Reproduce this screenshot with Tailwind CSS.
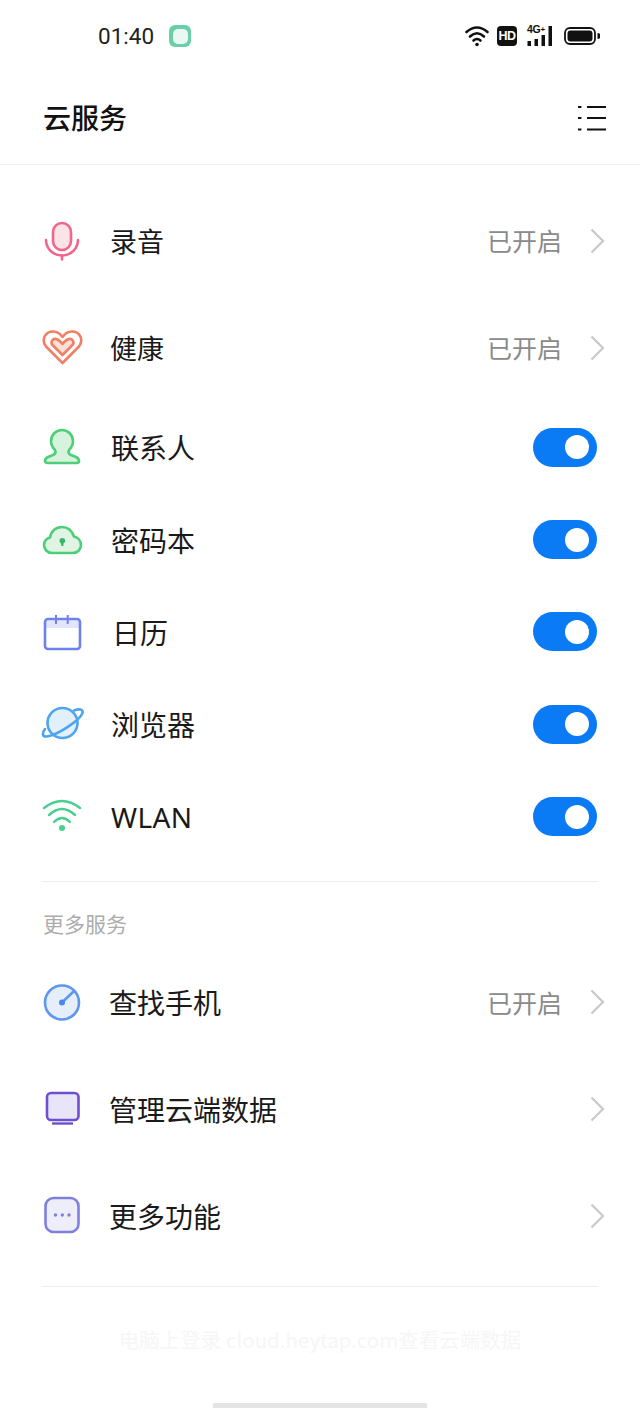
<!doctype html>
<html lang="zh">
<head>
<meta charset="utf-8">
<script src="https://cdn.jsdelivr.net/npm/@tailwindcss/browser@4"></script>
</head>
<body class="bg-white">
<div class="w-[640px] h-[1408px] flex flex-col overflow-hidden bg-white text-[#1a1a1a] font-['Noto_Sans_CJK_SC','Noto_Sans',sans-serif]">

  <!-- status bar -->
  <div class="h-[72px] shrink-0 flex items-center pl-[98px] pr-[40px]">
    <span class="text-[22.5px] leading-none font-['Roboto',sans-serif] text-[#222]">01:40</span>
    <span class="ml-[15px] w-[22px] h-[22px] rounded-[6px] bg-[#68cfa8] flex items-center justify-center">
      <span class="w-[15px] h-[15px] rounded-[5px] bg-[#e9f8f2]"></span>
    </span>
    <div class="ml-auto flex items-center gap-[8px]">
      <svg width="24" height="22" viewBox="0 0 24 22" fill="none" stroke="#111" stroke-width="2.6" stroke-linecap="round">
        <path d="M1.5 7 Q12 -2 22.5 7"/><path d="M5 11.5 Q12 5 19 11.5"/><path d="M8.5 15.5 Q12 12.5 15.5 15.5"/>
        <circle cx="12" cy="19.5" r="1.8" fill="#111" stroke="none"/>
      </svg>
      <span class="w-[20px] h-[20px] rounded-[4px] bg-[#111] text-white text-[12.5px] leading-[20px] font-bold text-center font-['Liberation_Sans',sans-serif] tracking-[-0.5px]">HD</span>
      <span class="relative ml-[2px] w-[26px] h-[22px]">
        <span class="absolute left-0 top-[-1px] text-[10.5px] leading-[11px] font-bold font-['Liberation_Sans',sans-serif] tracking-[-0.3px] text-[#111]">4G<span class="text-[8px] align-top">+</span></span>
        <svg class="absolute inset-0" width="26" height="22" viewBox="0 0 26 22" fill="#111">
          <rect x="0.500" y="16" width="3.500" height="5"/><rect x="7.500" y="14" width="3.500" height="7"/><rect x="14.500" y="10" width="3.500" height="11"/><rect x="21.500" y="1" width="3.500" height="20"/>
        </svg>
      </span>
      <svg class="ml-[3px]" width="36" height="20" viewBox="0 0 36 20" fill="none">
        <rect x="1" y="2" width="30" height="16" rx="5" stroke="#111" stroke-width="1.8"/>
        <rect x="3.5" y="4.5" width="25" height="11" rx="3" fill="#111"/>
        <path d="M33.5 7 a3 3 0 0 1 0 6z" fill="#111"/>
      </svg>
    </div>
  </div>

  <!-- title bar -->
  <div class="h-[93px] shrink-0 flex items-center justify-between pl-[43px] pr-[34px] border-b border-[#f1f1f1]">
    <h1 class="mb-[2px] text-[28px] leading-none font-medium text-[#111]">云服务</h1>
    <svg width="28" height="26" viewBox="0 0 28 26" fill="none" stroke="#111" stroke-width="2">
      <path d="M9 2h19M9 13h19M9 24.500h19"/><path d="M0 2h3.4M0 13h3.4M0 24.500h3.4"/>
    </svg>
  </div>

  <!-- first group -->
  <div class="pt-[22px] px-[40px] shrink-0">
    <div class="h-[107px] flex items-center">
      <svg class="shrink-0 mt-[2px]" width="44" height="44" viewBox="0 0 44 44" fill="none" stroke="#f0668c" stroke-width="2.6" stroke-linecap="round">
        <rect x="13" y="3" width="18" height="27" rx="9" fill="#fbe3e6"/>
        <path d="M6 20 a16 15.500 0 0 0 32 0"/><path d="M22 35.500v4"/>
      </svg>
      <span class="ml-[26px] text-[27px] leading-none">录音</span>
      <span class="ml-auto text-[25px] leading-none text-[#8a8a8a]">已开启</span>
      <svg class="ml-[28px] mr-[-5px] shrink-0" width="15" height="26" viewBox="0 0 15 26" fill="none" stroke="#c9c9c9" stroke-width="2.2"><path d="M1.5 1.5 13 13 1.5 24.500"/></svg>
    </div>
    <div class="h-[107px] flex items-center">
      <svg class="shrink-0 mt-[2px]" width="44" height="44" viewBox="0 0 44 44" fill="none" stroke="#f27f63" stroke-width="2.6" stroke-linejoin="round">
        <path d="M22.500 36 L6 19.500 C1 13 5 4.500 13 4.500 C17 4.500 20.500 7 22.500 10 C24.500 7 28 4.500 32 4.500 C40 4.500 44 13 39 19.500 Z"/>
        <path d="M22.500 28 L12.500 18 C10 14.500 13 11.500 16 12 C18.500 12.500 21 15 22.500 17 C24 15 26.500 12.500 29 12 C32 11.500 35 14.500 32.500 18 Z" fill="#fbe0d8"/>
      </svg>
      <span class="ml-[26px] text-[27px] leading-none">健康</span>
      <span class="ml-auto text-[25px] leading-none text-[#8a8a8a]">已开启</span>
      <svg class="ml-[28px] mr-[-5px] shrink-0" width="15" height="26" viewBox="0 0 15 26" fill="none" stroke="#c9c9c9" stroke-width="2.2"><path d="M1.5 1.5 13 13 1.5 24.500"/></svg>
    </div>

    <div class="h-[92.4px] flex items-center">
      <svg class="shrink-0" width="44" height="44" viewBox="0 0 44 44" fill="#d7f2dd" stroke="#4ccf78" stroke-width="2.6" stroke-linejoin="round">
        <path d="M22 5 C28 5 33 10 33 16 C33 20 31 23 29 25 C28 27 29 29 31 30 L36 32 C38 33 39 35 39 36 C39 37.500 38 38 36.500 38 L7.500 38 C6 38 5 37.500 5 36 C5 35 6 33 8 32 L13 30 C15 29 16 27 15 25 C13 23 11 20 11 16 C11 10 16 5 22 5Z"/>
      </svg>
      <span class="ml-[27px] text-[28px] leading-none">联系人</span>
      <span class="ml-auto mr-[3px] w-[64px] h-[39px] rounded-full bg-[#0a7bf5] flex items-center justify-end pr-[8px]"><span class="w-[24px] h-[24px] rounded-full bg-white"></span></span>
    </div>
    <div class="h-[92.4px] flex items-center">
      <svg class="shrink-0" width="44" height="44" viewBox="0 0 44 44" fill="#dff4e3" stroke="#4ccf78" stroke-width="2.6" stroke-linejoin="round">
        <path d="M12 35 C7 35 4 31 4 27 C4 23 7 20 10 19.500 C11 13 16 9 22 9 C28 9 32 13 34 18.500 C38 19.500 41 23 41 27 C41 31 38 35 33 35 Z"/>
        <circle cx="22.300" cy="22.700" r="2.800" fill="#35b866" stroke="none"/>
        <rect x="21.200" y="23" width="2.200" height="5" fill="#35b866" stroke="none"/>
      </svg>
      <span class="ml-[27px] text-[28px] leading-none">密码本</span>
      <span class="ml-auto mr-[3px] w-[64px] h-[39px] rounded-full bg-[#0a7bf5] flex items-center justify-end pr-[8px]"><span class="w-[24px] h-[24px] rounded-full bg-white"></span></span>
    </div>
    <div class="h-[92.4px] flex items-center">
      <svg class="shrink-0 mt-[2px]" width="44" height="44" viewBox="0 0 44 44" fill="none" stroke="#6e82ee" stroke-width="2.6">
        <rect x="5" y="8" width="35" height="9" fill="#e3e6fb" stroke="none"/>
        <rect x="5" y="8" width="35" height="30" rx="3"/>
        <path d="M16 4v9M27.700 4v9" stroke-width="2"/>
      </svg>
      <span class="ml-[28px] text-[28px] leading-none">日历</span>
      <span class="ml-auto mr-[3px] w-[64px] h-[39px] rounded-full bg-[#0a7bf5] flex items-center justify-end pr-[8px]"><span class="w-[24px] h-[24px] rounded-full bg-white"></span></span>
    </div>
    <div class="h-[92.4px] flex items-center">
      <svg class="shrink-0" width="44" height="44" viewBox="0 0 44 44" fill="none" stroke="#4ea4ee" stroke-width="2.6" stroke-linecap="round">
        <circle cx="22.500" cy="21" r="15" fill="#e2f0fb"/>
        <path d="M34 8.500 C41 6 44 8 42 12 C39 19 17 33 7 34.500 C2 35 2 31 5 27"/>
      </svg>
      <span class="ml-[27px] text-[28px] leading-none">浏览器</span>
      <span class="ml-auto mr-[3px] w-[64px] h-[39px] rounded-full bg-[#0a7bf5] flex items-center justify-end pr-[8px]"><span class="w-[24px] h-[24px] rounded-full bg-white"></span></span>
    </div>
    <div class="h-[92.4px] flex items-center">
      <svg class="shrink-0" width="44" height="44" viewBox="0 0 44 44" fill="none" stroke="#49cf8f" stroke-width="2.4" stroke-linecap="round">
        <path d="M4 13 Q22 -1 40 13"/><path d="M9 20 Q22 8 35 20"/><path d="M14 27 Q22 19 30 27"/>
        <circle cx="22" cy="33" r="3" fill="#49cf8f" stroke="none"/>
      </svg>
      <span class="ml-[27px] text-[28px] leading-none font-['Noto_Sans',sans-serif] tracking-[0.4px] text-[#1a1a1a]">WLAN</span>
      <span class="ml-auto mr-[3px] w-[64px] h-[39px] rounded-full bg-[#0a7bf5] flex items-center justify-end pr-[8px]"><span class="w-[24px] h-[24px] rounded-full bg-white"></span></span>
    </div>
  </div>

  <!-- second group -->
  <div class="mt-[18px] mx-[42px] h-px w-[556px] bg-[#efefef] shrink-0"></div>
  <div class="px-[43px] h-[67px] shrink-0 flex items-center pt-[17px] text-[21px] leading-none text-[#acacac]">更多服务</div>

  <div class="px-[40px] shrink-0">
    <div class="h-[107px] flex items-center">
      <svg class="shrink-0 mt-[2px]" width="44" height="44" viewBox="0 0 44 44" fill="none" stroke="#5e97ee" stroke-width="2.6">
        <circle cx="22" cy="21.500" r="17" fill="#e6eefb"/>
        <path d="M22 21.500 L33 11" stroke-width="2.600" stroke-linecap="round"/>
        <circle cx="22" cy="21.500" r="3" fill="#4a86e8" stroke="none"/>
      </svg>
      <span class="ml-[25px] text-[28px] leading-none">查找手机</span>
      <span class="ml-auto text-[25px] leading-none text-[#8a8a8a]">已开启</span>
      <svg class="ml-[28px] mr-[-5px] shrink-0" width="15" height="26" viewBox="0 0 15 26" fill="none" stroke="#c9c9c9" stroke-width="2.2"><path d="M1.5 1.5 13 13 1.5 24.500"/></svg>
    </div>
    <div class="h-[107px] flex items-center">
      <svg class="shrink-0" width="44" height="44" viewBox="0 0 44 44" fill="none" stroke="#6f4fd0" stroke-width="2.6">
        <rect x="7" y="6" width="31.500" height="27" rx="4" fill="#e9e5f9"/>
        <path d="M12 36.500h21" stroke-width="2.400"/>
      </svg>
      <span class="ml-[25px] text-[28px] leading-none">管理云端数据</span>
      <svg class="ml-auto mr-[-5px] shrink-0" width="15" height="26" viewBox="0 0 15 26" fill="none" stroke="#c9c9c9" stroke-width="2.2"><path d="M1.5 1.5 13 13 1.5 24.500"/></svg>
    </div>
    <div class="h-[107px] flex items-center">
      <svg class="shrink-0" width="44" height="44" viewBox="0 0 44 44" fill="none" stroke="#7f7fe0" stroke-width="2.6">
        <rect x="5.500" y="4" width="33" height="34" rx="8" fill="#eeeefb"/>
        <circle cx="15.500" cy="21" r="1.700" fill="#7f7fe0" stroke="none"/><circle cx="22.300" cy="21" r="1.700" fill="#7f7fe0" stroke="none"/><circle cx="29" cy="21" r="1.700" fill="#7f7fe0" stroke="none"/>
      </svg>
      <span class="ml-[25px] text-[28px] leading-none">更多功能</span>
      <svg class="ml-auto mr-[-5px] shrink-0" width="15" height="26" viewBox="0 0 15 26" fill="none" stroke="#c9c9c9" stroke-width="2.2"><path d="M1.5 1.5 13 13 1.5 24.500"/></svg>
    </div>
  </div>

  <div class="mt-[16px] mx-[42px] h-px w-[556px] bg-[#efefef] shrink-0"></div>

  <p class="mt-[40px] text-center text-[20.5px] leading-[24px] text-[#f6f6f6] whitespace-nowrap">电脑上登录 cloud.heytap.com查看云端数据</p>

  <div class="mt-auto mx-auto w-[214px] h-[5px] rounded-t-[2px] bg-[#e4e4e4] shrink-0"></div>
</div>
</body>
</html>
